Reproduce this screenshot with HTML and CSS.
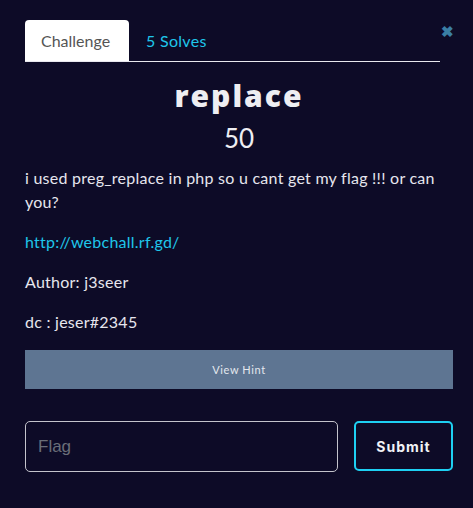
FILE: index.html
```html
<!DOCTYPE html>
<html>
<head>
<meta charset="utf-8">
<link rel="stylesheet" href="styles.css">
</head>
<body>
<div class="modal">
  <div class="top">
    <nav class="tabs">
      <a class="tab active">Challenge</a>
      <a class="tab">5 Solves</a>
    </nav>
    <span class="close">&#x2716;</span>
  </div>
  <h2 class="name">replace</h2>
  <h3 class="value">50</h3>
  <div class="desc">
    <p>i used preg_replace in php so u cant get my flag !!! or can you?</p>
    <p><a class="link">http://webchall.rf.gd/</a></p>
    <p>Author: j3seer</p>
    <p>dc : jeser#2345</p>
  </div>
  <button class="hint">View Hint</button>
  <div class="submit-row">
    <input class="flag" placeholder="Flag">
    <button class="submit">Submit</button>
  </div>
</div>
</body>
</html>
```
FILE: styles.css
```css
html, body {
  margin: 0;
  background: #0d0b27;
  height: 100%;
}
body {
  font-family: "Lato", "Open Sans", sans-serif;
  color: #e6e6ee;
}
.modal {
  padding: 20px 20px 0 25px;
}
.top {
  display: flex;
  align-items: flex-start;
}
.tabs {
  flex: 0 0 415px;
  display: flex;
  border-bottom: 1px solid #e8e8ee;
  height: 41px;
}
.tab {
  font-size: 16px;
  padding: 0 17px;
  line-height: 41px;
  color: #1fc6ea;
  letter-spacing: 0.3px;
}
.tab.active {
  background: #fff;
  color: #555;
  border-radius: 4px 4px 0 0;
  padding: 0 16px;
  width: 72px;
  letter-spacing: 0;
}
.close {
  margin-left: 1px;
  margin-top: 1px;
  color: #3a7fa5;
  font-size: 15px;
  line-height: 20px;
  font-weight: bold;
}
.name {
  margin: 14px 0 0;
  text-align: center;
  font-family: "Open Sans", sans-serif;
  font-size: 30px;
  line-height: 40px;
  font-weight: 800;
  letter-spacing: 2px;
  color: #eeeef2;
}
.value {
  margin: 6px 0 0;
  text-align: center;
  font-size: 26px;
  line-height: 32px;
  font-weight: 400;
  color: #eeeef2;
}
.desc {
  margin-top: 12px;
  font-size: 16px;
  line-height: 24px;
  letter-spacing: 0.25px;
  width: 428px;
}
.desc p {
  margin: 0 0 16px;
}
.link {
  color: #1fc6ea;
}
.hint {
  display: block;
  width: 428px;
  height: 39px;
  margin-top: 14px;
  border: none;
  background: #5e7592;
  color: #e4e8ee;
  font-family: "Lato", sans-serif;
  font-size: 11px;
  letter-spacing: 0.6px;
}
.submit-row {
  display: flex;
  gap: 16px;
  margin-top: 32px;
  width: 428px;
}
.flag {
  flex: 0 0 313px;
  box-sizing: border-box;
  height: 51px;
  background: #0d0b27;
  border: 1px solid #c4c4cc;
  border-radius: 5px;
  padding: 0 12px;
  font-family: "Liberation Sans", sans-serif;
  font-size: 17px;
  color: #eee;
}
.flag::placeholder {
  color: #6a6e78;
}
.submit {
  flex: 1;
  box-sizing: border-box;
  height: 50px;
  background: #0d0b27;
  border: 2px solid #1ed0f2;
  border-radius: 5px;
  color: #f2f2f6;
  font-family: "Inter", sans-serif;
  font-weight: 700;
  font-size: 14px;
  letter-spacing: 1px;
}
```
